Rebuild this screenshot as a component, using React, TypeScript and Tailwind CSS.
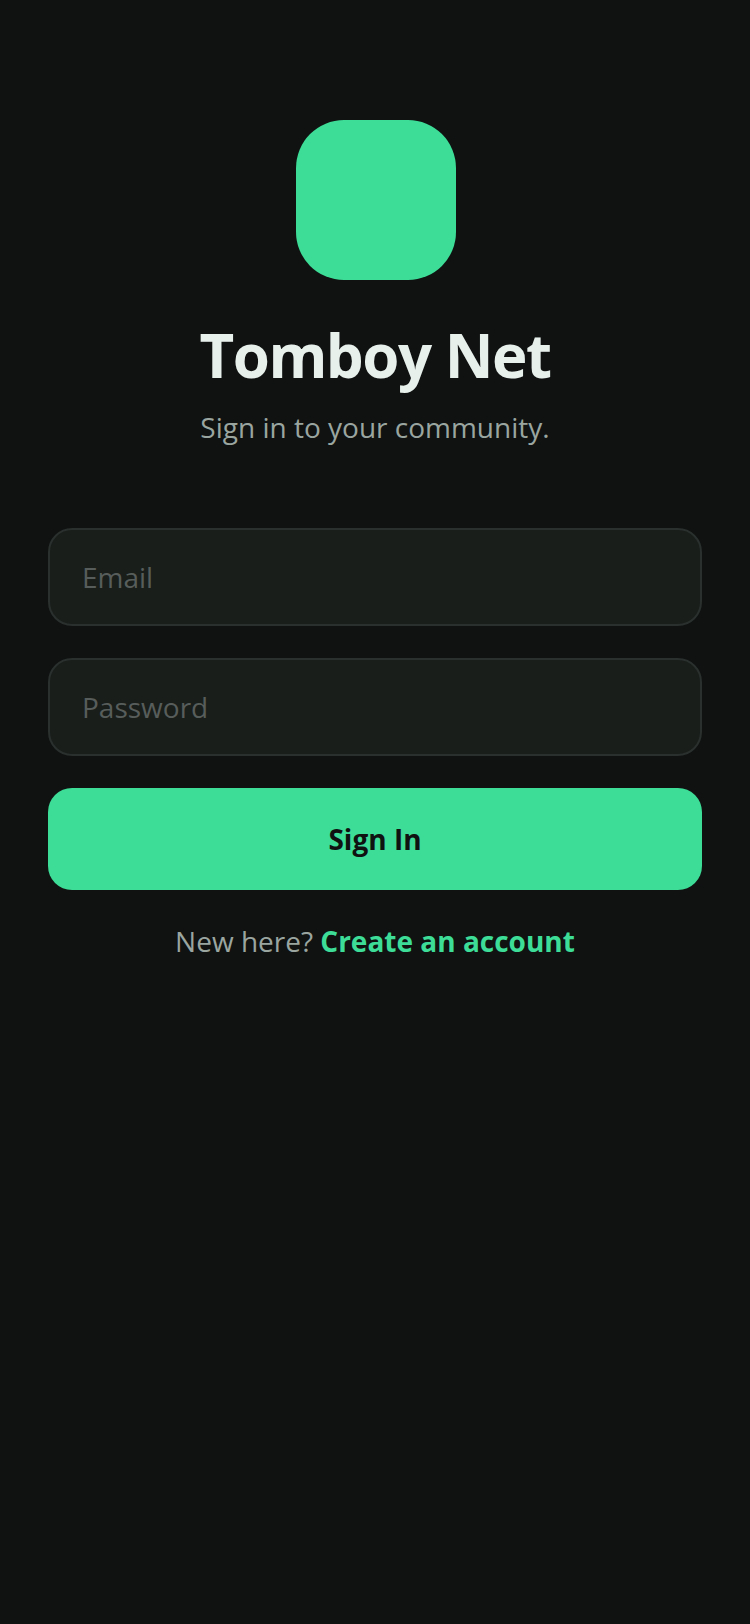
export default function App() {
  return (
    <div className="min-h-[1624px] w-full bg-[#0f1211] font-['Open_Sans',sans-serif] px-12 pt-[120px] flex flex-col items-center">
      <div className="w-40 h-40 ml-px rounded-[48px] bg-[#3ddc97]" />
      <h1 className="mt-[34px] text-[60px] leading-[82px] font-bold tracking-[-1.5px] text-[#e8f0ec]">Tomboy Net</h1>
      <p className="mt-[11px] text-[28px] leading-[40px] text-[#9aa5a0]">Sign in to your community.</p>

      <form className="w-full mt-[81px] flex flex-col gap-8">
        <input
          type="email"
          placeholder="Email"
          className="w-full h-[98px] px-8 rounded-3xl bg-[#191e1b] border-2 border-[#2a302d] text-[28px] outline-none placeholder:text-[#575d5a]"
        />
        <input
          type="password"
          placeholder="Password"
          className="w-full h-[98px] px-8 rounded-3xl bg-[#191e1b] border-2 border-[#2a302d] text-[28px] outline-none placeholder:text-[#575d5a]"
        />
        <button type="button" className="w-full h-[102px] rounded-3xl bg-[#3ddc97] text-[28px] font-bold text-[#0f1211]">
          Sign In
        </button>
      </form>

      <p className="mt-8 text-[28px] leading-[38px] text-[#9aa5a0]">
        New here? <span className="font-bold text-[#3ddc97]">Create an account</span>
      </p>
    </div>
  );
}
